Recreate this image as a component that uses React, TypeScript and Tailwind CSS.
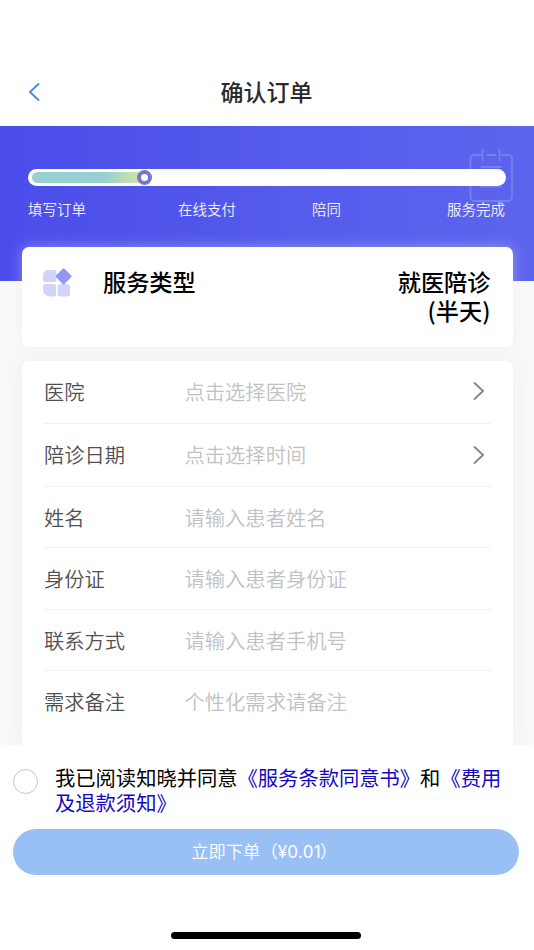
import React from "react";

type Field = { label: string; placeholder: string; picker?: boolean; height: string };

const fields: Field[] = [
  { label: "医院", placeholder: "点击选择医院", picker: true, height: "h-[62.5px] pb-px" },
  { label: "陪诊日期", placeholder: "点击选择时间", picker: true, height: "h-[63px]" },
  { label: "姓名", placeholder: "请输入患者姓名", height: "h-[61px] pt-px" },
  { label: "身份证", placeholder: "请输入患者身份证", height: "h-[62px]" },
  { label: "联系方式", placeholder: "请输入患者手机号", height: "h-[61px] pt-px" },
  { label: "需求备注", placeholder: "个性化需求请备注", height: "h-[62px]" },
];

function Header() {
  return (
    <header className="flex h-[126px] items-end bg-white">
      <div className="grid h-[68px] w-full grid-cols-[1fr_auto_1fr] items-center">
        <svg className="ml-[28px] h-[20px] w-[13px]" viewBox="0 0 13 20" fill="none" stroke="#4a88dc" strokeWidth="1.9">
          <path d="M11 1.5 2 10l9 8.5" />
        </svg>
        <h1 className="-mt-[2px] mr-px text-[23px] leading-[34px] font-medium text-[#2a2a2a]">确认订单</h1>
      </div>
    </header>
  );
}

function Progress() {
  return (
    <section className="relative h-[154.5px] bg-linear-to-r from-[#4b4dea] to-[#5d65ed] px-[28px] pt-[42.5px]">
      <svg
        className="absolute top-[22px] left-[469px] h-[56px] w-[45px]"
        viewBox="0 0 45 56"
        fill="none"
        stroke="#777ff1"
        strokeWidth="1.8"
      >
        <path d="M13 7H5.500A4 4 0 0 0 1.500 11v38a4 4 0 0 0 4 4h33.500a4 4 0 0 0 4-4V11a4 4 0 0 0-4-4H32M17.500 7h9.500M13.500 1v12M30.500 1v12M11.500 19h21M11.500 38.500h21" />
      </svg>
      <div className="relative flex h-[17.5px] items-center rounded-full bg-white pl-[4px]">
        <div className="h-[11.5px] w-[111px] rounded-l-full bg-linear-to-r from-[#97cfd3] from-[64%] to-[#d3e79a]" />
        <div className="-ml-[6px] size-[15px] rounded-full border-4 border-[#7476d0] bg-white" />
      </div>
      <div className="mt-[12px] flex text-[14.5px] leading-[22px] font-[350] text-[#f1f2fe]">
        <span>填写订单</span>
        <span className="ml-[92px]">在线支付</span>
        <span className="ml-[76px]">陪同</span>
        <span className="mr-px ml-auto">服务完成</span>
      </div>
    </section>
  );
}

function ServiceCard() {
  return (
    <section className="relative -mt-[34px] flex h-[100.5px] justify-between rounded-[7px] bg-white pr-[22px] pl-[21px] pt-[19px] text-[23.2px] leading-[30px] font-medium text-black shadow-[0_0_14px_rgba(232,232,240,0.4)]">
      <div className="flex">
        <svg className="mt-[2px] h-[30px] w-[29px]" viewBox="0 0 29 30">
          <path
            fill="#d2d4fb"
            d="M5 2h6a2.500 2.500 0 0 1 2.500 2.500V11.500A2.500 2.500 0 0 1 11 14H2.500A2.500 2.500 0 0 1 0 11.500V7a5 5 0 0 1 5-5Z"
          />
          <path
            fill="#d2d4fb"
            d="M2.500 16H10.500a2.500 2.500 0 0 1 2.500 2.500v7.500A2.500 2.500 0 0 1 10.500 28.500H7a7 7 0 0 1-7-7v-3a2.500 2.500 0 0 1 2.500-2.500Z"
          />
          <rect x="14.500" y="16" width="12.500" height="12.500" rx="3" fill="#d2d4fb" />
          <rect x="14.600" y="2.300" width="12" height="12" rx="1.500" fill="#9196f4" transform="rotate(45 20.600 8.300)" />
        </svg>
        <h2 className="ml-[31px]">服务类型</h2>
      </div>
      <p className="mt-px text-right leading-[29px]">
        就医陪诊
        <br />
        (半天)
      </p>
    </section>
  );
}

function FieldRow({ label, placeholder, picker, height }: Field) {
  return (
    <div className={`flex shrink-0 items-center border-b border-[#f0f0f0] text-[20.3px] last:border-b-0 ${height}`}>
      <span className="w-[140.5px] font-[350] text-[#505050]">{label}</span>
      <span className="flex-1 font-[350] text-[#c1c1c3]">{placeholder}</span>
      {picker && (
        <svg className="mr-[6px] h-[20px] w-[13px]" viewBox="0 0 13 20" fill="none" stroke="#858585" strokeWidth="1.9">
          <path d="M2 1.500 11 10l-9 8.500" />
        </svg>
      )}
    </div>
  );
}

function Footer() {
  return (
    <footer className="relative flex h-[205.5px] flex-col bg-white px-[13px] pt-[20.5px]">
      <div className="flex items-start text-[20.3px] leading-[25px] text-black">
        <span className="mt-[3.500px] size-[25px] shrink-0 rounded-full border-[1.500px] border-[#c6c6c6]" />
        <p className="ml-[17px] whitespace-nowrap">
          我已阅读知晓并同意<span className="text-[#1208c4]">《服务条款同意书》</span>和
          <span className="text-[#1208c4]">
            《费用
            <br />
            及退款须知》
          </span>
        </p>
      </div>
      <button className="mt-[14px] h-[45.5px] w-[505.500px] shrink-0 rounded-full bg-[#99c0f5] pr-[3px] text-[17.300px] font-[350] text-white">
        立即下单（<span className="font-[Inter] text-[17px] font-normal tracking-[0.3px]">¥0.01</span>
        <span className="-ml-px">）</span>
      </button>
      <div className="mt-[57px] mr-[2px] h-[7px] w-[190px] shrink-0 self-center rounded-full bg-black" />
    </footer>
  );
}

export default function App() {
  return (
    <div className="flex h-[950px] w-[534px] flex-col overflow-hidden bg-[#f9f9f9] font-['Noto_Sans_CJK_SC',sans-serif]">
      <Header />
      <Progress />
      <main className="flex min-h-0 flex-1 flex-col pr-[21.500px] pl-[22px]">
        <ServiceCard />
        <section className="mt-[14px] flex flex-1 flex-col rounded-t-[7px] bg-white px-[22px] shadow-[0_0_18px_rgba(225,225,225,0.4)]">
          {fields.map((f) => (
            <FieldRow key={f.label} {...f} />
          ))}
        </section>
      </main>
      <Footer />
    </div>
  );
}
